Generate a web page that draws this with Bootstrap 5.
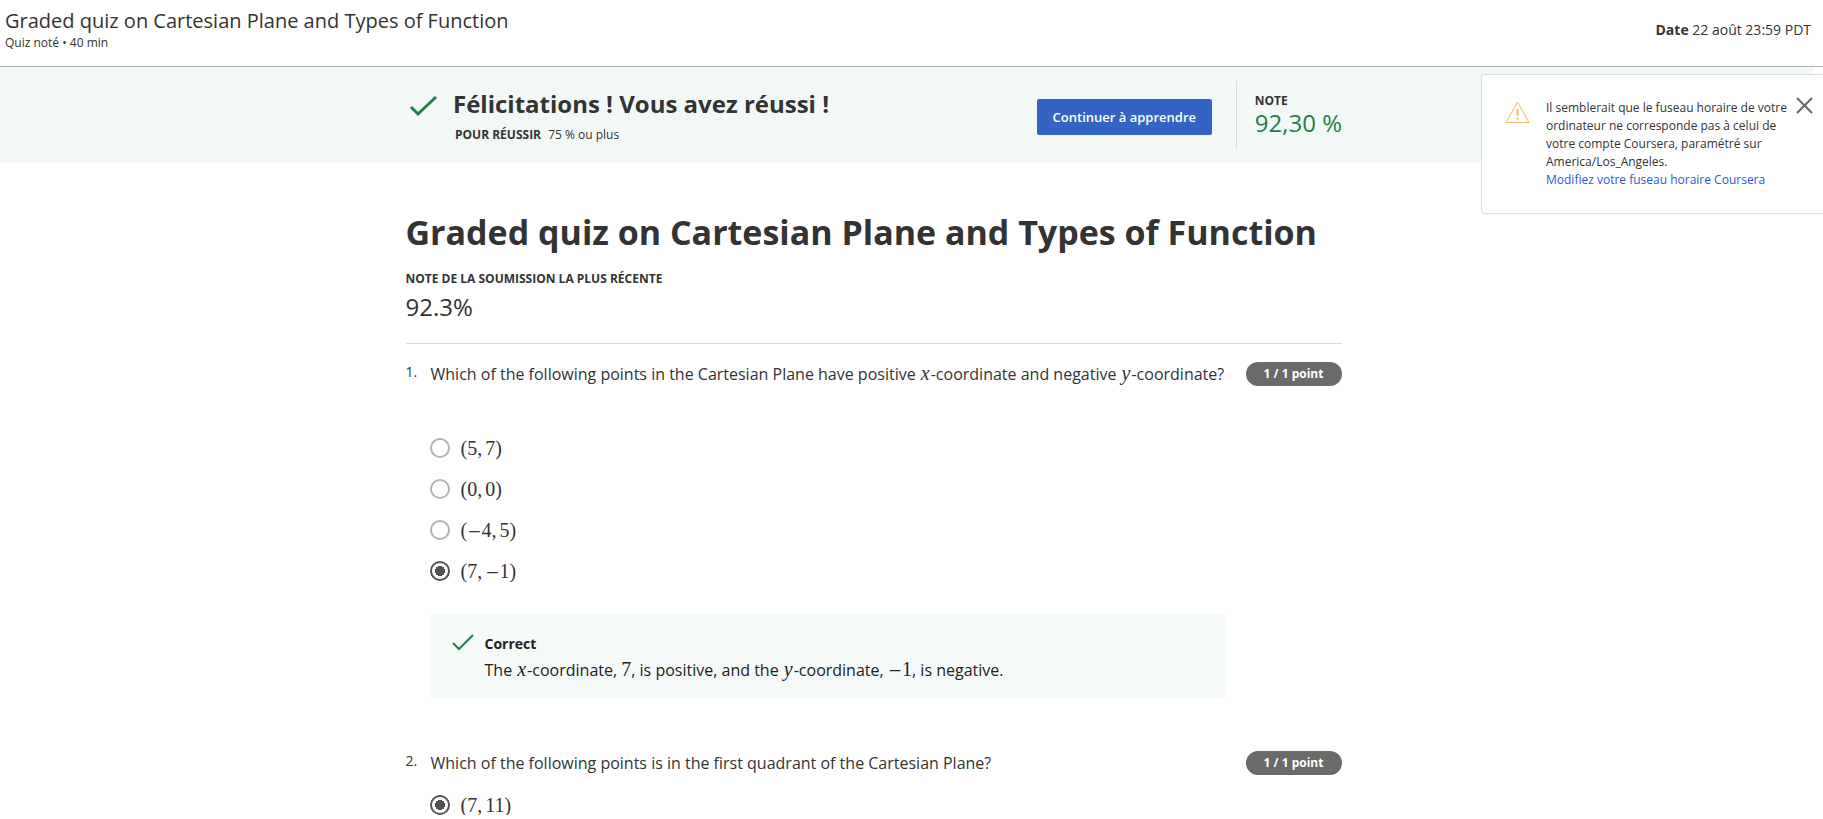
<!DOCTYPE html>
<html lang="fr">
<head>
<meta charset="utf-8">
<meta name="viewport" content="width=device-width, initial-scale=1">
<title>Graded quiz on Cartesian Plane and Types of Function</title>
<link href="https://cdn.jsdelivr.net/npm/bootstrap@5.3.0/dist/css/bootstrap.min.css" rel="stylesheet">
<style>
  body { font-family: "Open Sans", sans-serif; font-size: 16px; line-height: 24px; color: #333; background: #fff; }
  .fs-12 { font-size: 12px; line-height: 18px; }
  .fs-14 { font-size: 14px; line-height: 20px; }
  .topbar { height: 67px; border-bottom: 1px solid #b3b6b5; padding: 8px 12px 8px 5px; }
  .topbar h2 { font-size: 20px; line-height: 26px; font-weight: 400; }
  .result-band { background: #f2f8f6; margin-right: 9px; padding-right: 66px; }
  .quiz-body { padding-right: 76px; }
  .quiz-col { max-width: 936px; margin: 0 auto; }
  .band-row { min-height: 96px; }
  .band-text { padding-top: 22px; }
  .band-title { font-size: 24px; line-height: 30px; font-weight: 700; }
  .band-pass { margin: 7px 0 0 2px; }
  .band-check { margin: 23px 16px 0 3px; }
  .btn-continue { background: #3563c4; color: #fff; border: 0; border-radius: 2px; font-size: 13px; line-height: 20px; font-weight: 600; width: 175px; height: 36px; padding: 0; margin-top: 4px; }
  .btn-continue:hover { background: #2a52a8; color: #fff; }
  .grade-box { border-left: 1px solid #d8dcda; margin-left: 24px; padding: 11px 0 0 18px; height: 68px; }
  .grade-num { font-size: 24px; line-height: 30px; }
  .grade-box .grade-num { line-height: 26px; }
  .green { color: #1f8046; }
  .quiz-title { font-size: 34px; line-height: 44px; font-weight: 700; padding-top: 47px; }
  .rule { border-top: 1px solid #dcdcdc; margin-top: 21px; }
  .q-row { display: grid; grid-template-columns: 25px minmax(0, 1fr) 96px; column-gap: 0; }
  .q-first { margin-top: 18px; }
  .q-next { margin-top: 53px; }
  .q-text { padding-right: 18px; }
  .pill { background: #6a6a6a; color: #fff; border-radius: 12px; height: 24px; line-height: 24px; font-size: 12px; font-weight: 700; text-align: center; }
  .tex { font-family: "Liberation Serif", serif; font-size: 20px; line-height: 20px; }
  .tex i { margin: 0 1px; }
  .tex .comma { margin-right: 3px; }
  .tex .minus { font-family: "DejaVu Serif", serif; font-size: 17px; }
  .opts { margin-left: 25px; }
  .opt { height: 20px; margin-bottom: 21px; gap: 11px; }
  .opt input { appearance: none; flex: none; width: 20px; height: 20px; margin: 0 0 0 -1px; border: 2px solid #b3b3b3; border-radius: 50%; background: #fff; }
  .opt input:checked { border-color: #525252; background: radial-gradient(circle, #525252 0 5px, transparent 5px); }
  .feedback { background: #f5faf8; margin: 33px 116px 0 25px; padding: 20px 20px 15px; min-height: 84px; color: #222; }
  .feedback svg { margin: 0 11px 0 1px; }
  .notice { position: absolute; top: 74px; right: 0; width: 342px; height: 140px; background: #fff; border: 1px solid #ddd; border-right: 0; border-radius: 4px 0 0 4px; padding: 22px 10px 24px 23px; }
  .notice a { color: #2a5bd7; text-decoration: none; }
  .notice-text { margin-left: 16px; padding-top: 2px; width: 243px; }
</style>
</head>
<body>
<header class="topbar d-flex justify-content-between">
  <div>
    <h2 class="m-0">Graded quiz on Cartesian Plane and Types of Function</h2>
    <div class="fs-12">Quiz noté • 40 min</div>
  </div>
  <div class="fs-14 pt-1 mt-2"><strong>Date</strong> 22 août 23:59 PDT</div>
</header>

<section class="result-band">
  <div class="quiz-col band-row d-flex">
    <svg class="band-check flex-shrink-0" width="28" height="28" viewBox="0 0 28 28" fill="none" stroke="#1f8046" stroke-width="3" aria-hidden="true"><path d="M2 17L9 24L27 7"/></svg>
    <div class="band-text">
      <h3 class="band-title m-0">Félicitations ! Vous avez réussi !</h3>
      <div class="fs-12 band-pass"><strong class="me-1">POUR RÉUSSIR</strong> 75 % ou plus</div>
    </div>
    <div class="ms-auto d-flex align-items-center align-self-center">
      <button type="button" class="btn btn-continue">Continuer à apprendre</button>
      <div class="grade-box">
        <div class="fs-12 fw-bold">NOTE</div>
        <div class="grade-num green">92,30 %</div>
      </div>
    </div>
  </div>
</section>

<aside class="notice d-flex align-items-start" role="alert">
  <svg class="flex-shrink-0 mt-1" width="25" height="25" viewBox="0 0 25 25" fill="none" stroke="#f3bd62" aria-hidden="true"><path d="M12.500 1L24 21.500H1Z"/><path d="M12.500 8V15M12.500 16.500V18.500" stroke-width="2"/></svg>
  <div class="fs-12 notice-text">Il semblerait que le fuseau horaire de votre ordinateur ne corresponde pas à celui de votre compte Coursera, paramétré sur America/Los_Angeles.<br><a href="#">Modifiez votre fuseau horaire Coursera</a></div>
  <button type="button" class="btn p-0 border-0 d-flex ms-2" aria-label="Fermer"><svg width="17" height="17" viewBox="0 0 17 17" stroke="#666" stroke-width="2" aria-hidden="true"><path d="M1 1L16 16M16 1L1 16"/></svg></button>
</aside>

<main class="quiz-body">
  <div class="quiz-col">
    <h1 class="quiz-title m-0">Graded quiz on Cartesian Plane and Types of Function</h1>
    <div class="fs-12 fw-bold mt-3">NOTE DE LA SOUMISSION LA PLUS RÉCENTE</div>
    <div class="grade-num mt-1">92.3%</div>
    <div class="rule"></div>

    <section class="q-row q-first">
      <div class="fs-14">1.</div>
      <div class="q-text">Which of the following points in the Cartesian Plane have positive <span class="tex"><i>x</i></span>-coordinate and negative <span class="tex"><i>y</i></span>-coordinate?</div>
      <div class="pill">1 / 1 point</div>
    </section>
    <div class="opts mt-5 pt-1">
      <label class="opt d-flex align-items-center"><input type="radio" name="q1"><span class="tex">(5<span class="comma">,</span>7)</span></label>
      <label class="opt d-flex align-items-center"><input type="radio" name="q1"><span class="tex">(0<span class="comma">,</span>0)</span></label>
      <label class="opt d-flex align-items-center"><input type="radio" name="q1"><span class="tex">(<span class="minus">−</span>4<span class="comma">,</span>5)</span></label>
      <label class="opt d-flex align-items-center"><input type="radio" name="q1" checked><span class="tex">(7<span class="comma">,</span><span class="minus">−</span>1)</span></label>
    </div>
    <div class="feedback d-flex">
      <svg class="flex-shrink-0" width="22" height="18" viewBox="0 0 22 18" fill="none" stroke="#1f8046" stroke-width="2" aria-hidden="true"><path d="M1 9L7 15L21 1"/></svg>
      <div>
        <div class="fs-14 fw-bold">Correct</div>
        <div class="mt-1">The <span class="tex"><i>x</i></span>-coordinate, <span class="tex">7</span>, is positive, and the <span class="tex"><i>y</i></span>-coordinate, <span class="tex"><span class="minus">−</span>1</span>, is negative.</div>
      </div>
    </div>

    <section class="q-row q-next">
      <div class="fs-14">2.</div>
      <div class="q-text">Which of the following points is in the first quadrant of the Cartesian Plane?</div>
      <div class="pill">1 / 1 point</div>
    </section>
    <div class="opts mt-3 pt-1">
      <label class="opt d-flex align-items-center mb-0"><input type="radio" name="q2" checked><span class="tex">(7<span class="comma">,</span>11)</span></label>
    </div>
  </div>
</main>
<script src="https://cdn.jsdelivr.net/npm/bootstrap@5.3.0/dist/js/bootstrap.bundle.min.js"></script>
</body>
</html>
